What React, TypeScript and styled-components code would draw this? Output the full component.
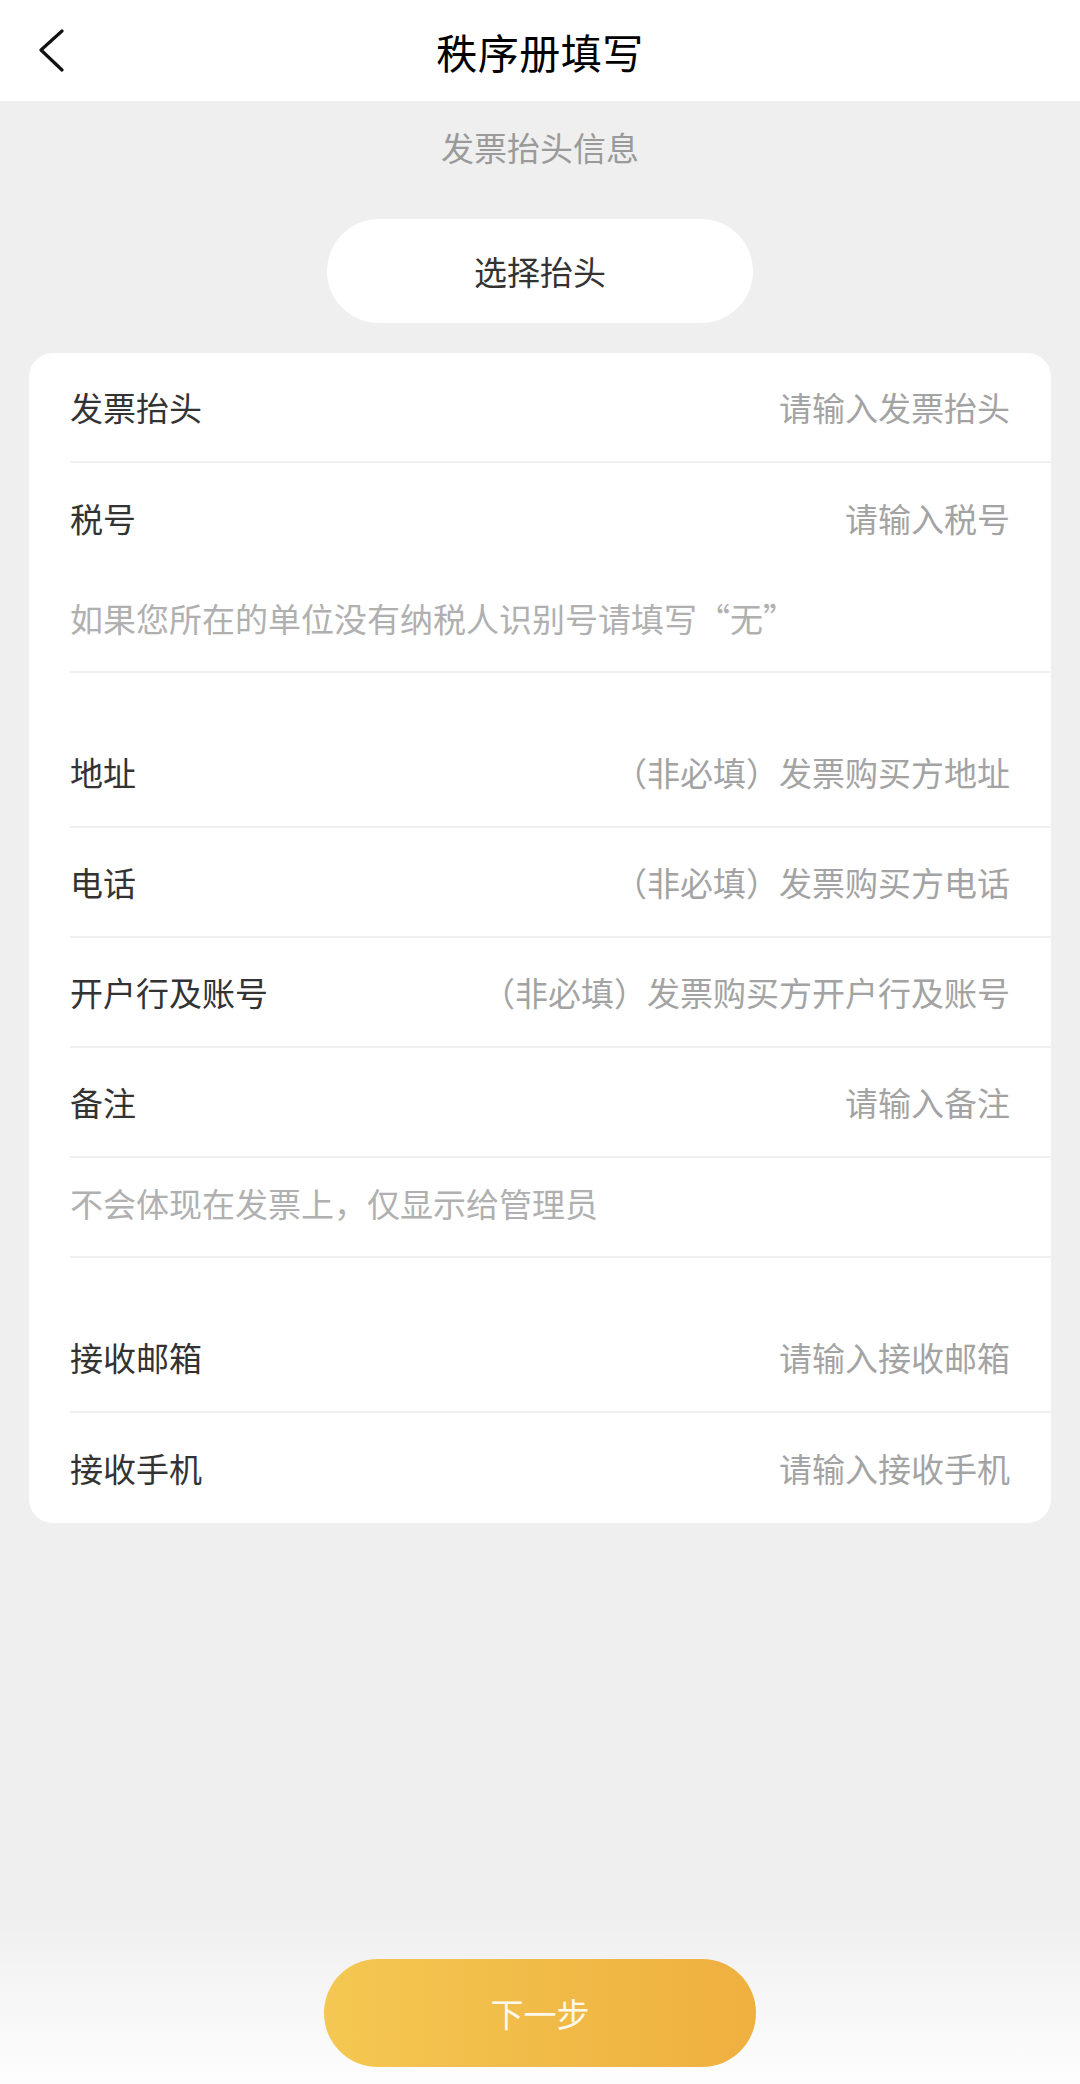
import React, { ReactElement } from 'react';
import styled, { createGlobalStyle } from 'styled-components';

const GlobalStyle = createGlobalStyle`
  html, body {
    margin: 0;
    padding: 0;
    background: #efefef;
  }

  body {
    font-family: 'Noto Sans CJK SC', 'Noto Sans', sans-serif;
    color: #333;
  }

  * {
    box-sizing: border-box;
  }
`;

const Page = styled.div`
  display: flex;
  flex-direction: column;
  min-height: 2084px;
  background: #efefef;
`;

const Header = styled.header`
  display: grid;
  grid-template-columns: 120px 1fr 120px;
  align-items: center;
  height: 101px;
  background: #fff;
`;

const BackButton = styled.button`
  display: flex;
  align-items: center;
  justify-content: flex-start;
  height: 101px;
  padding: 0 0 0 36px;
  border: 0;
  background: transparent;
  cursor: pointer;
`;

const Title = styled.h1`
  margin: 0;
  text-align: center;
  font-size: 41px;
  font-weight: 400;
  color: #000;
  letter-spacing: 0.5px;
`;

const SectionTitle = styled.div`
  padding-top: 23px;
  line-height: 46px;
  text-align: center;
  font-size: 33px;
  color: #9a9a9a;
`;

const PillRow = styled.div`
  display: flex;
  justify-content: center;
  padding: 49px 0 30px;
`;

const Pill = styled.button`
  width: 426px;
  height: 104px;
  border: 0;
  border-radius: 52px;
  background: #fff;
  font-family: inherit;
  font-size: 33px;
  color: #333;
  cursor: pointer;
`;

const Card = styled.section`
  margin: 0 29px;
  padding-left: 41px;
  background: #fff;
  border-radius: 24px;
  overflow: hidden;
`;

const Row = styled.div<{ $divider?: boolean }>`
  display: flex;
  align-items: center;
  justify-content: space-between;
  height: 110px;
  padding-right: 41px;
  border-bottom: ${(p) => (p.$divider ? '2px solid #f0f0f0' : '0')};
  font-size: 33px;
`;

const Label = styled.span`
  color: #333;
`;

const Placeholder = styled.span`
  color: #a3a3a3;
`;

const Hint = styled.div`
  height: 100px;
  padding-top: 22px;
  line-height: 46px;
  font-size: 33px;
  color: #b0b0b0;
  border-bottom: 2px solid #f0f0f0;
`;

const Spacer = styled.div`
  height: 45px;
`;

const Footer = styled.footer`
  display: flex;
  justify-content: center;
  margin-top: auto;
  padding: 40px 0 17px;
  background: linear-gradient(180deg, #efefef 0%, #f6f6f6 45%, #fdfdfd 100%);
`;

const NextButton = styled.button`
  width: 432px;
  height: 108px;
  border: 0;
  border-radius: 54px;
  background: linear-gradient(90deg, #f4c852 0%, #f1bb48 50%, #efb040 100%);
  font-family: inherit;
  font-size: 33px;
  color: rgba(255, 255, 255, 0.92);
  cursor: pointer;
`;

interface Field {
  label: string;
  placeholder: string;
  divider?: boolean;
}

const headerFields: Field[] = [
  { label: '发票抬头', placeholder: '请输入发票抬头', divider: true },
  { label: '税号', placeholder: '请输入税号' }
];

const buyerFields: Field[] = [
  { label: '地址', placeholder: '（非必填）发票购买方地址', divider: true },
  { label: '电话', placeholder: '（非必填）发票购买方电话', divider: true },
  { label: '开户行及账号', placeholder: '（非必填）发票购买方开户行及账号', divider: true },
  { label: '备注', placeholder: '请输入备注', divider: true }
];

const contactFields: Field[] = [
  { label: '接收邮箱', placeholder: '请输入接收邮箱', divider: true },
  { label: '接收手机', placeholder: '请输入接收手机' }
];

function FieldRows({ fields }: { fields: Field[] }): ReactElement {
  return (
    <>
      {fields.map((field) => (
        <Row key={field.label} $divider={field.divider}>
          <Label>{field.label}</Label>
          <Placeholder>{field.placeholder}</Placeholder>
        </Row>
      ))}
    </>
  );
}

export default function App(): ReactElement {
  return (
    <Page>
      <GlobalStyle />
      <Header>
        <BackButton aria-label="返回">
          <svg width="30" height="44" viewBox="0 0 30 44" fill="none">
            <path
              d="M26 2 L5 21 L26 41"
              stroke="#111"
              strokeWidth="3.2"
              strokeLinecap="round"
              strokeLinejoin="round"
            />
          </svg>
        </BackButton>
        <Title>秩序册填写</Title>
        <div />
      </Header>

      <SectionTitle>发票抬头信息</SectionTitle>

      <PillRow>
        <Pill>选择抬头</Pill>
      </PillRow>

      <Card>
        <FieldRows fields={headerFields} />
        <Hint>如果您所在的单位没有纳税人识别号请填写“无”</Hint>
        <Spacer />
        <FieldRows fields={buyerFields} />
        <Hint>不会体现在发票上，仅显示给管理员</Hint>
        <Spacer />
        <FieldRows fields={contactFields} />
      </Card>

      <Footer>
        <NextButton>下一步</NextButton>
      </Footer>
    </Page>
  );
}
